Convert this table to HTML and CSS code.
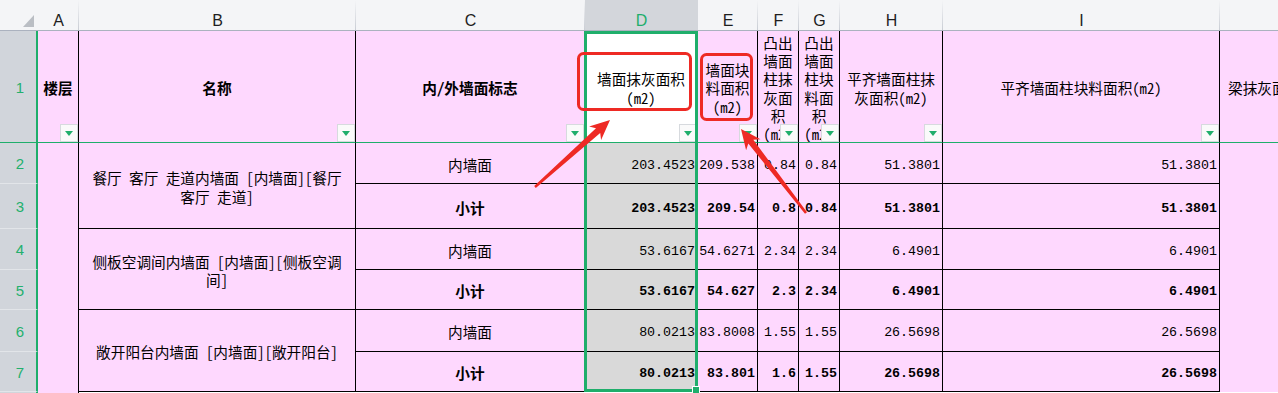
FILE: index.html
```html
<!DOCTYPE html>
<html lang="zh-CN">
<head>
<meta charset="utf-8">
<title>墙面工程量</title>
<link rel="stylesheet" href="styles.css">
</head>
<body>
<div class="sheet">
  <div class="grid">
    <div class="corner"><span class="tri"></span></div>
    <div class="ch">A</div>
    <div class="ch">B</div>
    <div class="ch">C</div>
    <div class="ch sel">D</div>
    <div class="ch">E</div>
    <div class="ch">F</div>
    <div class="ch">G</div>
    <div class="ch">H</div>
    <div class="ch">I</div>
    <div class="ch last"></div>

    <div class="rh hr">1</div>
    <div class="c hd b"><span class="t">楼层</span><i class="dd"></i></div>
    <div class="c hd b"><span class="t">名称</span><i class="dd"></i></div>
    <div class="c hd b"><span class="t">内/外墙面标志</span><i class="dd"></i></div>
    <div class="c hd dh"><span class="t">墙面抹灰面积<br>(m2)</span><i class="dd"></i></div>
    <div class="c hd"><span class="t">墙面块<br>料面积<br>(m2)</span><i class="dd"></i></div>
    <div class="c hd"><span class="t">凸出<br>墙面<br>柱抹<br>灰面<br>积<br>(m2)</span><i class="dd"></i></div>
    <div class="c hd"><span class="t">凸出<br>墙面<br>柱块<br>料面<br>积<br>(m2)</span><i class="dd"></i></div>
    <div class="c hd"><span class="t">平齐墙面柱抹<br>灰面积(m2)</span><i class="dd"></i></div>
    <div class="c hd"><span class="t">平齐墙面柱块料面积(m2)</span><i class="dd"></i></div>
    <div class="c hd cjh"><span class="t">梁抹灰面积(m2)</span></div>

    <div class="rh">2</div>
    <div class="c ca"></div>
    <div class="c cb"><span class="t">餐厅 客厅 走道内墙面 [内墙面][餐厅<br>客厅 走道]</span></div>
    <div class="c"><span class="t">内墙面</span></div>
    <div class="c n dc">203.4523</div>
    <div class="c n">209.538</div>
    <div class="c n">0.84</div>
    <div class="c n">0.84</div>
    <div class="c n">51.3801</div>
    <div class="c n">51.3801</div>
    <div class="c cj"></div>

    <div class="rh">3</div>
    <div class="c b"><span class="t">小计</span></div>
    <div class="c n b dc">203.4523</div>
    <div class="c n b">209.54</div>
    <div class="c n b">0.8</div>
    <div class="c n b">0.84</div>
    <div class="c n b">51.3801</div>
    <div class="c n b">51.3801</div>

    <div class="rh">4</div>
    <div class="c cb"><span class="t">侧板空调间内墙面 [内墙面][侧板空调<br>间]</span></div>
    <div class="c"><span class="t">内墙面</span></div>
    <div class="c n dc">53.6167</div>
    <div class="c n">54.6271</div>
    <div class="c n">2.34</div>
    <div class="c n">2.34</div>
    <div class="c n">6.4901</div>
    <div class="c n">6.4901</div>

    <div class="rh">5</div>
    <div class="c b"><span class="t">小计</span></div>
    <div class="c n b dc">53.6167</div>
    <div class="c n b">54.627</div>
    <div class="c n b">2.3</div>
    <div class="c n b">2.34</div>
    <div class="c n b">6.4901</div>
    <div class="c n b">6.4901</div>

    <div class="rh">6</div>
    <div class="c cb"><span class="t">敞开阳台内墙面 [内墙面][敞开阳台]</span></div>
    <div class="c"><span class="t">内墙面</span></div>
    <div class="c n dc">80.0213</div>
    <div class="c n">83.8008</div>
    <div class="c n">1.55</div>
    <div class="c n">1.55</div>
    <div class="c n">26.5698</div>
    <div class="c n">26.5698</div>

    <div class="rh">7</div>
    <div class="c b"><span class="t">小计</span></div>
    <div class="c n b dc">80.0213</div>
    <div class="c n b">83.801</div>
    <div class="c n b">1.6</div>
    <div class="c n b">1.55</div>
    <div class="c n b">26.5698</div>
    <div class="c n b">26.5698</div>

    <div class="rh"></div>
    <div class="blank"></div>
  </div>

  <div class="selection"><span class="handle"></span></div>

  <svg class="marks" width="1278" height="393" viewBox="0 0 1278 393">
    <rect x="578.5" y="53.5" width="112" height="56" rx="5" ry="5" fill="none" stroke="#ee2a24" stroke-width="3"/>
    <rect x="701.5" y="54.5" width="50" height="65" rx="5" ry="5" fill="none" stroke="#ee2a24" stroke-width="3"/>
    <polygon fill="#ee2a24" points="535.8,187.9 600.2,133.0 601.1,140.0 610,120 589.1,126.6 596.0,128.3 534.2,186.1"/>
    <polygon fill="#ee2a24" points="807.0,212.3 753.3,139.7 760.4,139.3 741,129 746.1,150.3 748.3,143.6 805.0,213.7"/>
  </svg>
</div>
</body>
</html>
```

FILE: styles.css
```css
html, body {
  margin: 0;
  padding: 0;
  background: #ffffff;
}

.sheet {
  position: relative;
  width: 1278px;
  height: 393px;
  overflow: hidden;
  background: #ffffff;
}

.grid {
  display: grid;
  width: max-content;
  grid-template-columns: 38px 41px 277px 229px 113px 60px 41px 41px 103px 277px 200px;
  grid-template-rows: 31px 112px 41px 45px 41px 40px 42px 40px 40px;
  font-family: "Noto Sans Mono CJK SC", "Noto Sans CJK SC", sans-serif;
  font-size: 14.67px;
  line-height: 18.3px;
  color: #000000;
}

.grid > div {
  box-sizing: border-box;
  min-width: 0;
  min-height: 0;
}

/* column headers */
.corner {
  background: #f4f5f7;
  border-bottom: 1px solid #abb2bf;
  display: flex;
  align-items: flex-end;
  justify-content: flex-end;
  padding: 0 4px 3px 0;
}

.tri {
  width: 0;
  height: 0;
  border-left: 11px solid transparent;
  border-bottom: 12px solid #babec4;
}

.ch {
  background: linear-gradient(to bottom, #f4f5f7, #c9cdd4) right top / 1px 100% no-repeat, #f4f5f7;
  border-bottom: 1px solid #abb2bf;
  display: flex;
  justify-content: center;
  align-items: flex-start;
  padding-top: 13px;
  font-family: "Liberation Sans", Arial, sans-serif;
  font-size: 16px;
  line-height: 16px;
  color: #1e1e1e;
}

.ch.sel {
  background: #d3d6db;
  color: #1fae6b;
}

.ch.last {
  background: #f4f5f7;
}

/* row headers */
.rh {
  background: #d1d5db;
  border-right: 2px solid #1fae6b;
  border-bottom: 1px solid #e2e5e9;
  color: #23b06d;
  font-family: "Liberation Sans", Arial, sans-serif;
  font-size: 15px;
  line-height: 16px;
  display: flex;
  align-items: center;
  justify-content: center;
  padding: 2px 0 0 4px;
}

.rh.hr {
  border-bottom-color: #1fae6b;
}

/* cells */
.c {
  position: relative;
  background: #fed8fe;
  border-right: 1px solid #000000;
  border-bottom: 1px solid #000000;
  display: flex;
  align-items: center;
  justify-content: center;
  text-align: center;
  white-space: nowrap;
  overflow: hidden;
  padding-top: 4px;
}

.t {
  display: block;
}

.b {
  font-weight: bold;
}

.hd {
  border-bottom-color: #1fae6b;
}

.dh {
  background: #ffffff;
}

.cjh {
  border-right: none;
  justify-content: flex-start;
  padding-left: 8px;
}

.ca {
  grid-row: span 7;
  border-bottom: none;
}

.cb {
  grid-row: span 2;
}

.cj {
  grid-row: span 6;
  border: none;
}

.n {
  justify-content: flex-end;
  font-family: "Liberation Mono", "Courier New", monospace;
  font-size: 13.3px;
  padding-right: 2px;
  padding-top: 6px;
}

.dc {
  background: #d9d9d9;
}

.blank {
  grid-column: span 9;
  background: #ffffff;
}

/* filter dropdown button */
.dd {
  position: absolute;
  right: 0;
  bottom: 0;
  width: 18px;
  height: 18px;
  box-sizing: border-box;
  background: #fafafa;
  border: 1px solid #d7dade;
  display: flex;
  align-items: center;
  justify-content: center;
}

.dd::after {
  content: "";
  width: 0;
  height: 0;
  border-left: 4px solid transparent;
  border-right: 4px solid transparent;
  border-top: 5px solid #1fae6b;
}

/* selected column outline */
.selection {
  position: absolute;
  left: 584px;
  top: 31px;
  width: 114px;
  height: 361px;
  box-sizing: border-box;
  border: 3px solid #1fae6b;
  pointer-events: none;
}

.handle {
  position: absolute;
  right: -5px;
  bottom: -5px;
  width: 6px;
  height: 6px;
  background: #1fae6b;
  border: 1px solid #ffffff;
}

/* annotation marks */
.marks {
  position: absolute;
  left: 0;
  top: 0;
  pointer-events: none;
}
```
